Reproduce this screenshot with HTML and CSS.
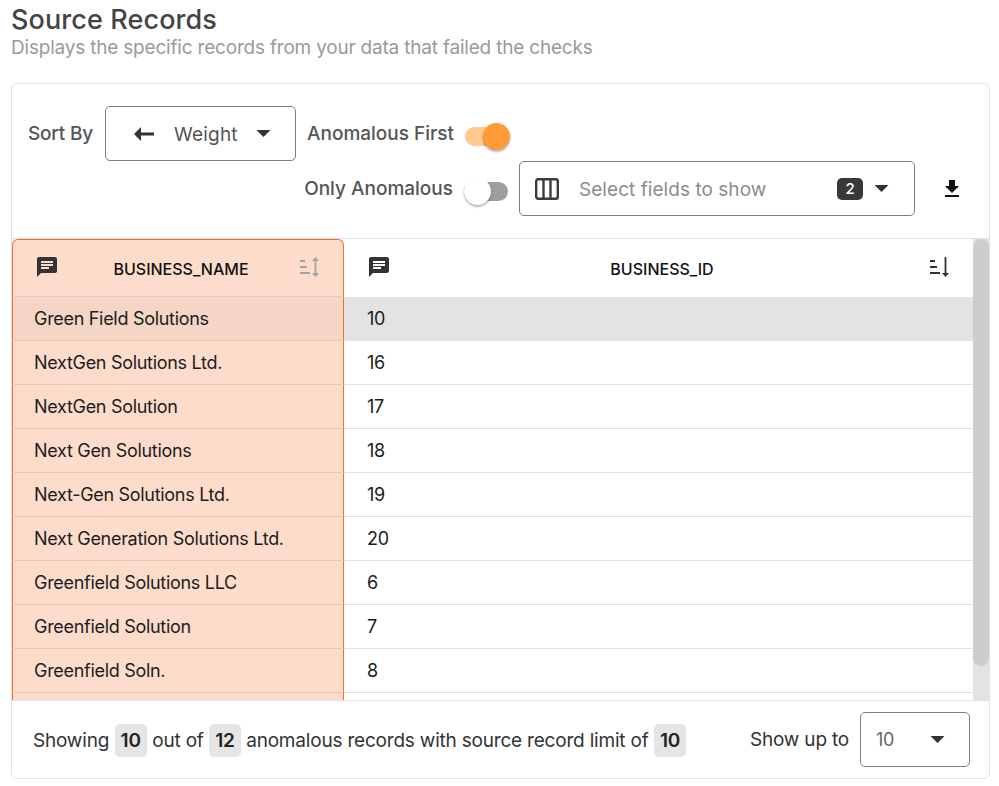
FILE: index.html
```html
<!DOCTYPE html>
<html lang="en">
<head>
<meta charset="utf-8">
<title>Source Records</title>
<link rel="stylesheet" href="styles.css">
</head>
<body>
<header class="page-head">
  <h1 class="title">Source Records</h1>
  <p class="subtitle">Displays the specific records from your data that failed the checks</p>
</header>
<section class="card">
  <div class="toolbar">
    <div class="bar-row">
      <span class="label sort-label">Sort By</span>
      <div class="select sort-select">
        <svg class="icon arrow" viewBox="0 0 20 14"><path d="M0 7l7-7v5.500h13v3H7V14z"/></svg>
        <span class="select-value">Weight</span>
        <svg class="icon caret" viewBox="7 10 10 5"><path d="M7 10l5 5 5-5z"/></svg>
      </div>
      <span class="label first-label">Anomalous First</span>
      <span class="toggle on"><span class="knob"></span></span>
    </div>
    <div class="bar-row end">
      <span class="label">Only Anomalous</span>
      <span class="toggle off"><span class="knob"></span></span>
      <div class="select fields-select">
        <svg class="icon columns" viewBox="0 0 24 22"><rect class="col-line" x="1.200" y="1.200" width="21.600" height="19.600" rx="2"/><path class="col-line" d="M8.500 1v20M15.500 1v20"/></svg>
        <span class="placeholder">Select fields to show</span>
        <span class="count">2</span>
        <svg class="icon caret" viewBox="7 10 10 5"><path d="M7 10l5 5 5-5z"/></svg>
      </div>
      <svg class="icon download" viewBox="0 0 24 24"><path d="M19 9h-4V3H9v6H5l7 7 7-7zM5 18v2h14v-2H5z"/></svg>
    </div>
  </div>
  <div class="table-wrap">
    <div class="table">
      <div class="row head">
        <div class="cell name">
          <svg class="icon chat" viewBox="0 0 24 24"><path d="M20 2H4c-1.1 0-1.99.9-1.99 2L2 22l4-4h14c1.1 0 2-.9 2-2V4c0-1.1-.9-2-2-2zM6 9h12v2H6V9zm8 5H6v-2h8v2zm4-6H6V6h12v2z"/></svg>
          <span class="col-title">BUSINESS_NAME</span>
          <svg class="icon sort muted" viewBox="0 0 24 24"><path d="M3 5h5v2H3zM3 11h7v2H3zM3 17h10v2H3z"/><path d="M18.500 2l-3.600 4h2.700v12h-2.700l3.600 4 3.600-4h-2.700V6h2.700z"/></svg>
        </div>
        <div class="cell id">
          <svg class="icon chat" viewBox="0 0 24 24"><path d="M20 2H4c-1.1 0-1.99.9-1.99 2L2 22l4-4h14c1.1 0 2-.9 2-2V4c0-1.1-.9-2-2-2zM6 9h12v2H6V9zm8 5H6v-2h8v2zm4-6H6V6h12v2z"/></svg>
          <span class="col-title">BUSINESS_ID</span>
          <svg class="icon sort" viewBox="0 0 24 24"><path d="M3 5h5v2H3zM3 11h7v2H3zM3 17h10v2H3z"/><path d="M17.600 2h1.800v16h2.600l-3.500 4-3.500-4h2.600z"/></svg>
        </div>
      </div>
      <div class="row hover"><div class="cell name">Green Field Solutions</div><div class="cell id">10</div></div>
      <div class="row"><div class="cell name">NextGen Solutions Ltd.</div><div class="cell id">16</div></div>
      <div class="row"><div class="cell name">NextGen Solution</div><div class="cell id">17</div></div>
      <div class="row"><div class="cell name">Next Gen Solutions</div><div class="cell id">18</div></div>
      <div class="row"><div class="cell name">Next-Gen Solutions Ltd.</div><div class="cell id">19</div></div>
      <div class="row"><div class="cell name">Next Generation Solutions Ltd.</div><div class="cell id">20</div></div>
      <div class="row"><div class="cell name">Greenfield Solutions LLC</div><div class="cell id">6</div></div>
      <div class="row"><div class="cell name">Greenfield Solution</div><div class="cell id">7</div></div>
      <div class="row"><div class="cell name">Greenfield Soln.</div><div class="cell id">8</div></div>
      <div class="row"><div class="cell name"></div><div class="cell id"></div></div>
    </div>
    <div class="scrollbar"><div class="thumb"></div></div>
  </div>
  <footer class="foot">
    <div class="summary">
      <span>Showing</span><span class="chip">10</span><span>out of</span><span class="chip">12</span><span>anomalous records with source record limit of</span><span class="chip">10</span>
    </div>
    <div class="limit">
      <span>Show up to</span>
      <div class="select limit-select">
        <span class="limit-value">10</span>
        <svg class="icon caret" viewBox="7 10 10 5"><path d="M7 10l5 5 5-5z"/></svg>
      </div>
    </div>
  </footer>
</section>
</body>
</html>
```
FILE: styles.css
```css
* { box-sizing: border-box; }
html, body { margin: 0; padding: 0; }
body {
  width: 999px;
  height: 786px;
  overflow: hidden;
  background: #fff;
  font-family: Inter, "Liberation Sans", sans-serif;
  color: #1a1a1a;
}
.page-head { padding: 4px 0 0 11px; height: 83px; }
.title { margin: 0; font-size: 27px; line-height: 32px; font-weight: 500; color: #444; letter-spacing: 0.1px; }
.subtitle { margin: 0; font-size: 19px; line-height: 24px; color: #9a9a9a; letter-spacing: -0.2px; white-space: nowrap; }

.card {
  margin-left: 11px;
  width: 979px;
  height: 696px;
  border: 1px solid #e2e2e2;
  border-radius: 6px;
  overflow: hidden;
  display: flex;
  flex-direction: column;
}
.toolbar { height: 155px; padding: 22px 0 0 16px; border-bottom: 1px solid #e2e2e2; }
.bar-row { display: flex; align-items: center; height: 55px; }
.bar-row.end { justify-content: flex-end; padding-right: 25px; }
.label { font-size: 19px; font-weight: 500; color: #555; white-space: nowrap; }
.sort-label { width: 77px; letter-spacing: -0.2px; }
.first-label { margin-left: 11px; width: 158px; margin-top: -1px; }
.icon { display: block; flex: none; fill: currentColor; }
.select {
  display: flex;
  align-items: center;
  border: 1px solid #7d7d7d;
  border-radius: 5px;
  height: 55px;
  background: #fff;
}
.sort-select { width: 191px; padding: 0 24px 0 28px; color: #555; }
.arrow { width: 20px; height: 14px; color: #333; }
.select-value { margin-left: 20px; padding-top: 1px; font-size: 19px; letter-spacing: 0.2px; flex: 1; }
.caret { width: 15px; height: 7px; color: #333; }
.toggle { position: relative; display: block; flex: none; width: 44px; height: 19px; border-radius: 10px; margin-top: 5px; }
.toggle.on { background: #ffc98f; }
.toggle.off { background: #9e9e9e; margin-left: 11px; margin-right: 11px; }
.knob {
  position: absolute;
  top: -4px;
  width: 27px;
  height: 27px;
  border-radius: 50%;
  box-shadow: 0 2px 2px rgba(0,0,0,.2), 0 1px 3px rgba(0,0,0,.15);
}
.on .knob { right: -1px; background: #ff9a36; }
.off .knob { left: 0; background: #fff; }
.fields-select { width: 396px; padding: 0 25px 0 15px; }
.columns { width: 24px; height: 22px; }
.col-line { fill: none; stroke: #3b3b3b; stroke-width: 2.4; }
.placeholder { margin-left: 20px; padding-top: 1px; font-size: 19px; color: #8c8c8c; letter-spacing: 0.05px; flex: 1; }
.count {
  width: 26px;
  height: 22px;
  background: #383838;
  color: #fff;
  border-radius: 5px;
  font-size: 15px;
  font-weight: 500;
  text-align: center;
  line-height: 22px;
  margin-right: 11px;
}
.download { width: 24px; height: 24px; color: #111; margin-left: 25px; }

.table-wrap { display: flex; height: 462px; overflow: hidden; border-bottom: 1px solid #e2e2e2; }
.table { flex: 1; min-width: 0; }
.row { display: flex; height: 44px; }
.row.head { height: 58px; }
.cell { display: flex; align-items: center; font-size: 18px; letter-spacing: -0.3px; color: #1c1c1c; white-space: nowrap; }
.cell.name {
  width: 332px;
  padding-left: 21px;
  background: #fddccb;
  border-left: 1px solid #f0702b;
  border-right: 1px solid #f0702b;
  border-bottom: 1px solid #e9c8b6;
}
.cell.id { flex: 1; padding-left: 23px; border-bottom: 1px solid #e0e0e0; }
.head .cell { padding: 1px 22px 0; font-size: 16px; font-weight: 500; color: #111; letter-spacing: 0; }
.head .cell.name { border-top: 1px solid #f0702b; border-top-left-radius: 6px; border-top-right-radius: 6px; border-bottom: 1px solid #e9c8b6; }
.head .cell.id { border-bottom: none; padding-left: 23px; }
.hover .cell.name { background: #f5d5c5; }
.hover .cell.id { background: #e3e3e3; }
.chat { width: 24px; height: 24px; color: #333; margin-top: -4px; }
.col-title { flex: 1; text-align: center; padding-left: 6px; }
.sort { width: 24px; height: 24px; color: #333; margin-top: -4px; }
.sort.muted { color: #a2a2a2; }
.scrollbar { width: 16px; flex: none; background: #e3e3e3; }
.thumb { height: 427px; background: #cdcdcd; border-radius: 8px; }

.foot { flex: 1; display: flex; align-items: center; justify-content: space-between; padding: 0 19px 0 21px; font-size: 19px; color: #333; letter-spacing: -0.2px; }
.summary { display: flex; align-items: center; gap: 5.5px; padding-top: 1px; white-space: nowrap; }
.chip { background: #e5e5e5; border-radius: 5px; height: 33px; line-height: 33px; padding: 0 6px; font-weight: 600; font-size: 19px; color: #222; }
.limit { display: flex; align-items: center; gap: 11px; }
.limit-select { width: 110px; padding: 0 24px 0 15px; color: #666; }
.limit-value { flex: 1; font-size: 18px; }
```
